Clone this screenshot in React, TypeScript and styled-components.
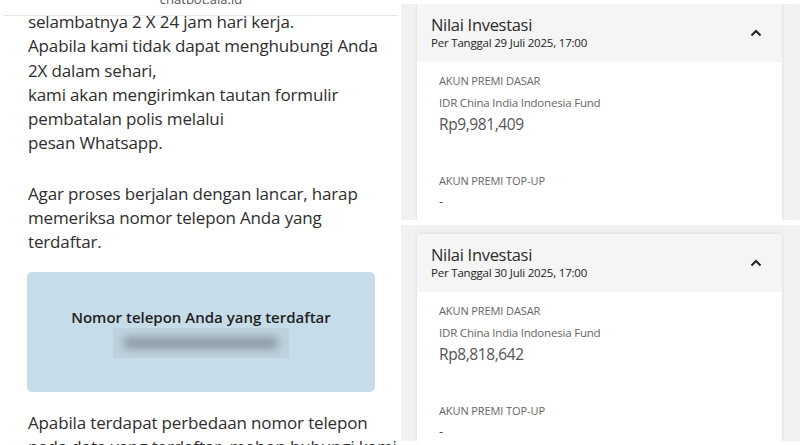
import styled, { createGlobalStyle } from "styled-components";

const GlobalStyle = createGlobalStyle`
  html, body {
    margin: 0;
    padding: 0;
    background: #ffffff;
  }
  body {
    font-family: "Open Sans", "Noto Sans", sans-serif;
    width: 800px;
    height: 445px;
    overflow: hidden;
  }
`;

const Page = styled.div`
  display: grid;
  grid-template-columns: 401px 399px;
  width: 800px;
  height: 445px;
  overflow: hidden;
`;

/* ---------- left: chatbot screenshot ---------- */

const ChatPane = styled.div`
  display: flex;
  flex-direction: column;
  height: 445px;
  overflow: hidden;
`;

const UrlBar = styled.div`
  position: relative;
  z-index: 1;
  flex: 0 0 auto;
  height: 15px;
  margin: 0 3px 0 4px;
  background: #fff;
  border-bottom: 1px solid #e6e6e6;
  display: flex;
  align-items: flex-end;
  justify-content: center;
  overflow: hidden;
`;

const UrlText = styled.span`
  font-size: 13px;
  color: #555;
  line-height: 13px;
  transform: translateY(-9px);
`;

const ChatBody = styled.div`
  margin-top: -6px;
  padding: 0 10px 0 28px;
  font-size: 17px;
  letter-spacing: -0.15px;
  line-height: 24.3px;
  color: #2e2e2e;
  white-space: nowrap;
`;

const Para = styled.p<{ $gap?: number }>`
  margin: 0 0 ${(p) => p.$gap ?? 0}px;
`;

const PhoneBox = styled.div`
  margin: 17px 0 0 -1px;
  width: 348px;
  height: 120px;
  box-sizing: border-box;
  padding-top: 35px;
  background: #c6dce8;
  border-radius: 5px;
  display: flex;
  flex-direction: column;
  align-items: center;
  letter-spacing: 0;
`;

const PhoneLabel = styled.div`
  font-size: 15px;
  font-weight: 600;
  line-height: 20px;
  color: #1f1f1f;
`;

const BlurPatch = styled.div`
  margin-top: 1px;
  width: 176px;
  height: 30px;
  background: #bdd2de;
  display: flex;
  align-items: center;
  justify-content: center;
  overflow: hidden;
`;

const BlurInk = styled.div`
  width: 156px;
  height: 12px;
  border-radius: 6px;
  background: #8c9ba5;
  filter: blur(4px);
`;

const AfterBox = styled(Para)`
  margin-top: 19px;
`;

/* ---------- right: investment cards ---------- */

const RightColumn = styled.div`
  display: flex;
  flex-direction: column;
  gap: 5px;
  padding-top: 4px;
  height: 445px;
  box-sizing: border-box;
`;

const Panel = styled.div<{ $h: number; $top: number }>`
  height: ${(p) => p.$h}px;
  box-sizing: border-box;
  padding: ${(p) => p.$top}px 18px 0 16px;
  background: #f1f1f1;
  overflow: hidden;
`;

const Card = styled.div`
  background: #fff;
  box-shadow: 0 0 3px rgba(0, 0, 0, 0.12);
  height: 240px;
`;

const CardHeader = styled.div`
  height: 58px;
  box-sizing: border-box;
  padding: 11px 20px 0 14px;
  background: #f5f5f5;
  display: flex;
  justify-content: space-between;
  align-items: flex-start;
`;

const Title = styled.div`
  font-size: 16.5px;
  letter-spacing: -0.3px;
  line-height: 20px;
  color: #2b2b2b;
`;

const DateLine = styled.div`
  font-size: 11.5px;
  letter-spacing: -0.2px;
  line-height: 16px;
  color: #1e1e1e;
`;

const Chevron = styled.svg`
  margin-top: 14px;
  width: 12px;
  height: 8px;
`;

const CardBody = styled.div`
  padding: 11px 16px 0 22px;
`;

const Label = styled.div`
  font-size: 11px;
  letter-spacing: -0.1px;
  line-height: 16px;
  color: #666;
`;

const FundName = styled.div`
  margin-top: 6px;
  font-size: 11.5px;
  letter-spacing: -0.2px;
  line-height: 16px;
  color: #666;
`;

const Amount = styled.div`
  margin-top: 1px;
  font-size: 15.5px;
  letter-spacing: -0.4px;
  line-height: 24px;
  color: #555;
`;

const Section = styled.div<{ $gap: number }>`
  margin-top: ${(p) => p.$gap}px;
`;

const Dash = styled.div`
  margin-top: 4px;
  font-size: 13px;
  line-height: 16px;
  color: #555;
`;

type CardData = { date: string; amount: string };

const InvestCard = ({ date, amount }: CardData) => (
  <Card>
    <CardHeader>
      <div>
        <Title>Nilai Investasi</Title>
        <DateLine>Per Tanggal {date}</DateLine>
      </div>
      <Chevron viewBox="0 0 12 8">
        <path d="M1.5 6.5 L6 2 L10.5 6.5" fill="none" stroke="#222" strokeWidth="2" />
      </Chevron>
    </CardHeader>
    <CardBody>
      <Label>AKUN PREMI DASAR</Label>
      <FundName>IDR China India Indonesia Fund</FundName>
      <Amount>{amount}</Amount>
      <Section $gap={37}>
        <Label>AKUN PREMI TOP-UP</Label>
        <Dash>-</Dash>
      </Section>
    </CardBody>
  </Card>
);

export default function App() {
  return (
    <>
      <GlobalStyle />
      <Page>
        <ChatPane>
          <UrlBar>
            <UrlText>chatbot.ala.id</UrlText>
          </UrlBar>
          <ChatBody>
            <Para $gap={26}>
              selambatnya 2 X 24 jam hari kerja.
              <br />
              Apabila kami tidak dapat menghubungi Anda
              <br />
              2X dalam sehari,
              <br />
              kami akan mengirimkan tautan formulir
              <br />
              pembatalan polis melalui
              <br />
              pesan Whatsapp.
            </Para>
            <Para>
              Agar proses berjalan dengan lancar, harap
              <br />
              memeriksa nomor telepon Anda yang
              <br />
              terdaftar.
            </Para>
            <PhoneBox>
              <PhoneLabel>Nomor telepon Anda yang terdaftar</PhoneLabel>
              <BlurPatch>
                <BlurInk />
              </BlurPatch>
            </PhoneBox>
            <AfterBox>
              Apabila terdapat perbedaan nomor telepon
              <br />
              pada data yang terdaftar, mohon hubungi kami
            </AfterBox>
          </ChatBody>
        </ChatPane>
        <RightColumn>
          <Panel $h={216} $top={0}>
            <InvestCard date="29 Juli 2025, 17:00" amount="Rp9,981,409" />
          </Panel>
          <Panel $h={216} $top={9}>
            <InvestCard date="30 Juli 2025, 17:00" amount="Rp8,818,642" />
          </Panel>
        </RightColumn>
      </Page>
    </>
  );
}
